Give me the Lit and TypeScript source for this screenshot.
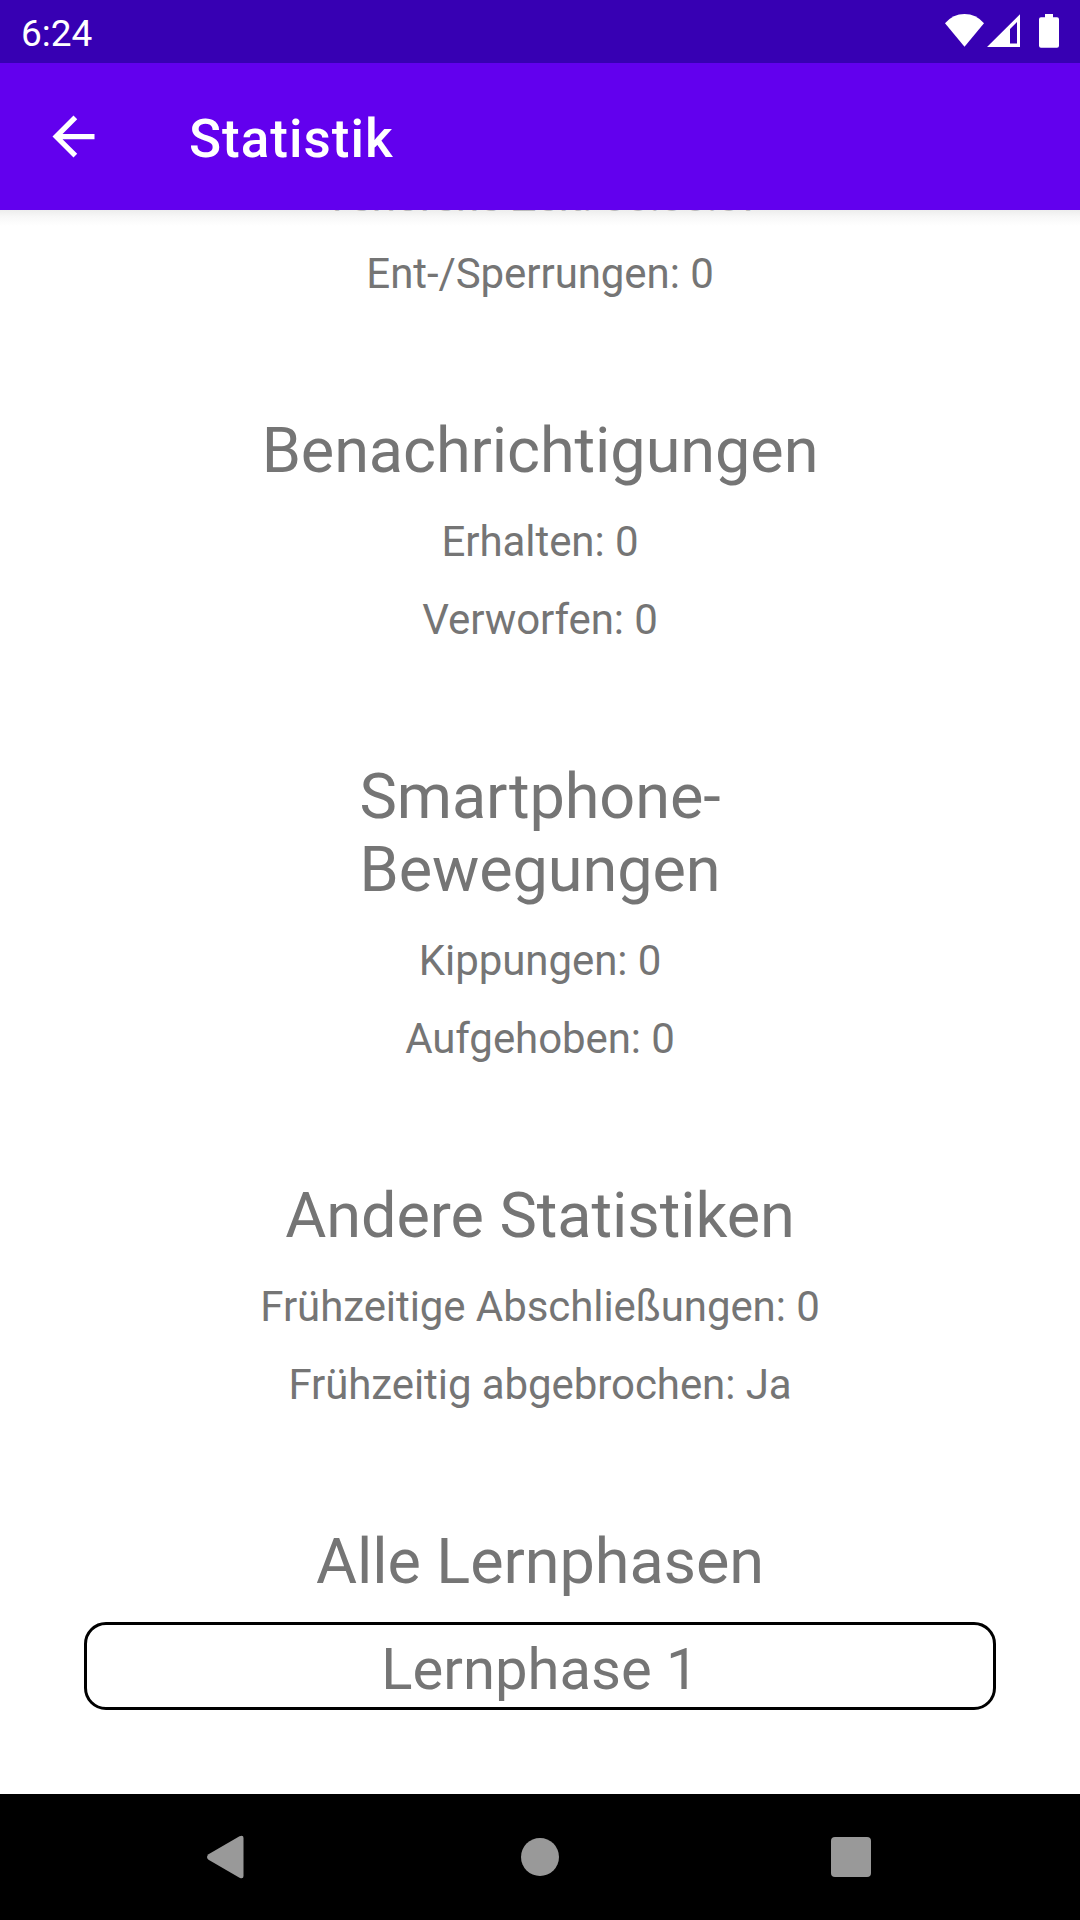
import { LitElement, html, css } from "lit";
import { customElement } from "lit/decorators.js";

interface Section {
  title: string[];
  rows: string[];
}

const SECTIONS: Section[] = [
  { title: ["Benachrichtigungen"], rows: ["Erhalten: 0", "Verworfen: 0"] },
  { title: ["Smartphone-", "Bewegungen"], rows: ["Kippungen: 0", "Aufgehoben: 0"] },
  {
    title: ["Andere Statistiken"],
    rows: ["Frühzeitige Abschließungen: 0", "Frühzeitig abgebrochen: Ja"],
  },
];

@customElement("status-bar")
class StatusBar extends LitElement {
  static styles = css`
    :host {
      display: flex;
      justify-content: space-between;
      box-sizing: border-box;
      height: 63px;
      padding-left: 21px;
      background: #3700b3;
      color: #fff;
    }
    .time {
      font-size: 37px;
      line-height: 67px;
    }
    .icons {
      display: block;
      width: 140px;
      height: 63px;
    }
  `;
  render() {
    return html`<span class="time">6:24</span>
      <svg class="icons" viewBox="940 0 140 63" fill="#fff">
        <path d="M945 23.2Q953 14 964.5 14T984 23.2L964.5 46.8Z" />
        <path
          fill-rule="evenodd"
          d="M987 47L1020 14.3V47ZM1010 43.5H1017V22L1010 29Z"
        />
        <path
          d="M1045 14H1053V17.3H1057Q1059 17.3 1059 19.3V45.7Q1059 47.7 1057 47.7H1041Q1039 47.7 1039 45.7V19.3Q1039 17.3 1041 17.3H1045Z"
        />
      </svg>`;
  }
}

@customElement("app-toolbar")
class AppToolbar extends LitElement {
  static styles = css`
    :host {
      display: flex;
      align-items: center;
      box-sizing: border-box;
      height: 147px;
      padding-left: 42px;
      gap: 84px;
      background: #6200ee;
      color: #fff;
    }
    .back {
      width: 63px;
      height: 63px;
      fill: #fff;
    }
    .title {
      font-size: 53px;
      font-weight: 500;
      line-height: 62px;
      letter-spacing: 1px;
      padding-top: 4px;
    }
  `;
  render() {
    return html`<svg class="back" viewBox="0 0 24 24">
        <path d="M20 11H7.83l5.59-5.59L12 4l-8 8 8 8 1.41-1.41L7.83 13H20v-2z" />
      </svg>
      <span class="title">Statistik</span>`;
  }
}

@customElement("nav-bar")
class NavBar extends LitElement {
  static styles = css`
    :host {
      display: block;
      height: 126px;
      background: #000;
    }
    .keys {
      display: block;
      width: 1080px;
      height: 126px;
    }
  `;
  render() {
    return html`<svg class="keys" viewBox="0 1794 1080 126" fill="#999">
      <path
        d="M208.5 1854.2L239.5 1836.2Q243.5 1834.5 243.5 1838V1876Q243.5 1879.5 239.5 1877.8L208.5 1859.8Q205.5 1857 208.5 1854.2Z"
      />
      <circle cx="540" cy="1857" r="19" />
      <rect x="831" y="1837" width="40" height="40" rx="4" />
    </svg>`;
  }
}

@customElement("app-root")
class AppRoot extends LitElement {
  static styles = css`
    :host {
      display: flex;
      flex-direction: column;
      width: 1080px;
      height: 1920px;
      overflow: hidden;
      background: #fff;
      font-family: Roboto, sans-serif;
    }
    .content {
      flex: 1;
      min-height: 0;
      overflow: hidden;
      display: flex;
      flex-direction: column;
      justify-content: flex-end;
      box-sizing: border-box;
      padding: 0 84px 84px;
      text-align: center;
      color: #757575;
      background: linear-gradient(#ededed, #f8f8f8 7px, #fff 16px);
    }
    .row {
      font-size: 42px;
      line-height: 78px;
      letter-spacing: -0.07px;
    }
    .scrolled {
      margin-bottom: -1px;
      padding-left: 8px;
      opacity: 0.4;
    }
    .heading {
      margin: 101px 0 16px;
      font-size: 63px;
      font-weight: 400;
      line-height: 73px;
      letter-spacing: -0.08px;
    }
    .line {
      display: block;
    }
    .phase {
      box-sizing: border-box;
      height: 88px;
      margin-top: 8px;
      border: 3px solid #000;
      border-radius: 22px;
      font-size: 58px;
      line-height: 88px;
    }
  `;
  render() {
    return html`<status-bar></status-bar>
      <app-toolbar></app-toolbar>
      <main class="content">
        <div class="row scrolled">Verlorene Zeit: 00:00:07</div>
        <div class="row">Ent-/Sperrungen: 0</div>
        ${SECTIONS.map(
          (s) => html`<h2 class="heading">
              ${s.title.map((t) => html`<span class="line">${t}</span>`)}
            </h2>
            ${s.rows.map((r) => html`<div class="row">${r}</div>`)}`
        )}
        <h2 class="heading">Alle Lernphasen</h2>
        <div class="phase">Lernphase 1</div>
      </main>
      <nav-bar></nav-bar>`;
  }
}
